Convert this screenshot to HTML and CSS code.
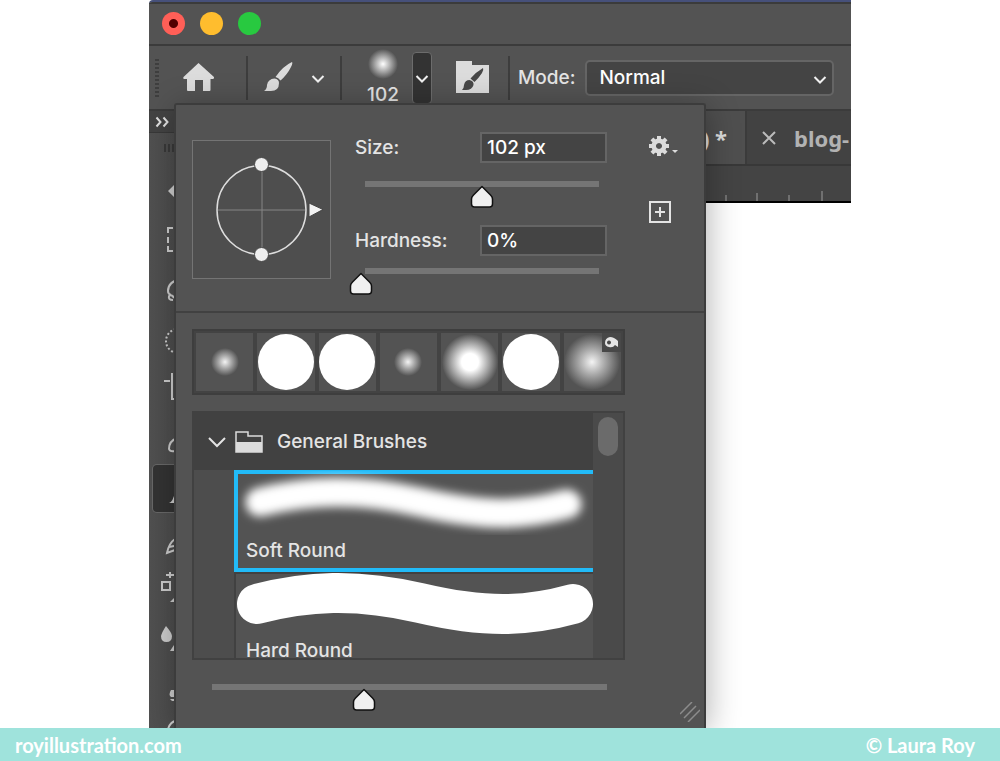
FILE: index.html
```html
<!DOCTYPE html>
<html lang="en">
<head>
    <meta charset="UTF-8">
    <meta name="viewport" content="width=device-width, initial-scale=1.0">
    <title>Brush Settings</title>
    <link rel="stylesheet" href="styles.css">
</head>
<body>

    <main class="stage">
        <div class="app">

            <!-- Window title bar -->
            <div class="titlebar">
                <button class="light close" aria-label="Close"></button>
                <button class="light minimize" aria-label="Minimize"></button>
                <button class="light expand" aria-label="Zoom"></button>
            </div>

            <!-- Options bar -->
            <div class="options">
                <div class="grip"></div>
                <button class="home" aria-label="Home">
                    <svg width="34" height="32" viewBox="0 0 34 32"><path fill="#dcdcdc" d="M16.500 1 L32 15 Q32.500 17 30 17 H28.500 V28 Q28.500 29 27.500 29 H21 V18 H13 V29 H6 Q5 29 5 28 V17 H3 Q0.500 17 1.500 15 Z"/></svg>
                </button>
                <div class="divider"></div>
                <button class="tool" aria-label="Brush tool">
                    <svg width="32" height="34" viewBox="0 0 32 34"><path fill="#dcdcdc" d="M30 1 Q31 2 29 6 Q25 14 18.500 19.500 Q16.500 16.500 13.500 16 Q21 5 30 1 Z M12.500 17.500 Q17 18 17 22 Q17 30 9 30 H2 Q5 28 5 24 Q6 18 12.500 17.500 Z"/></svg>
                </button>
                <button class="tool-menu" aria-label="Tool presets">
                    <svg width="16" height="16" viewBox="0 0 16 16"><path class="chevron" d="M2.500 6 L8 11.500 L13.500 6"/></svg>
                </button>
                <div class="divider"></div>
                <div class="brush-size">
                    <div class="tip"></div>
                    <div>102</div>
                </div>
                <button class="brush-menu" aria-label="Brush preset picker">
                    <svg width="16" height="16" viewBox="0 0 16 16"><path class="chevron" d="M2.500 6 L8 11.500 L13.500 6"/></svg>
                </button>
                <button class="folder" aria-label="Brush settings">
                    <svg width="35" height="34" viewBox="0 0 35 34"><path fill="#dcdcdc" d="M1 0 H17 V4 H34 V32 H1 Z"/><path fill="#484848" d="M28 7 Q29 9 27 12 Q23 18 19.500 21 L15.500 17.500 Q21 11 28 7 Z M14.500 19 Q19 20 18.500 24 Q17 29 11 29 H7 Q9 27 9 24 Q10 19 14.500 19 Z"/></svg>
                </button>
                <div class="divider"></div>
                <label class="mode-label" for="mode">Mode:</label>
                <div class="mode">
                    <select id="mode">
                        <option>Normal</option>
                        <option>Dissolve</option>
                        <option>Multiply</option>
                    </select>
                    <svg width="16" height="16" viewBox="0 0 16 16"><path class="chevron" d="M2.500 6 L8 11.500 L13.500 6"/></svg>
                </div>
            </div>

            <div class="workspace">

                <!-- Tools, mostly hidden behind the brush panel -->
                <div class="toolbar">
                    <button class="expand-tools" aria-label="Expand tools">
                        <svg width="16" height="12" viewBox="0 0 16 12"><path fill="none" stroke="#e0e0e0" stroke-width="2" d="M1.500 1.500 L5.500 6 L1.500 10.500 M8.500 1.500 L12.500 6 L8.500 10.500"/></svg>
                    </button>
                    <div class="toolbar-grip"></div>
                    <div class="tools">
                        <button aria-label="Move"><svg viewBox="0 0 47 47"><path fill="#ccc" d="M15 20 L21 14 V18 H26 V22 H21 V26 Z"/></svg></button>
                        <button aria-label="Marquee"><svg viewBox="0 0 47 47"><path class="line" d="M20 8 H15 V13 M15 17 V23 M15 26 V31 H20 M24 8 H30 M24 31 H30"/></svg></button>
                        <button aria-label="Lasso"><svg viewBox="0 0 47 47"><path class="line" d="M27 10 Q15 13 15 22 Q15 25 18 26 M20 31 Q15 31 16 27 Q19 25 21 29"/></svg></button>
                        <button aria-label="Quick selection"><svg viewBox="0 0 47 47"><circle class="line" cx="25" cy="23" r="12" stroke-dasharray="2 2"/></svg></button>
                        <button aria-label="Crop"><svg viewBox="0 0 47 47"><path class="line" d="M11 14 H17 M19 6 V32 H35"/></svg></button>
                        <button aria-label="Eyedropper"><svg viewBox="0 0 47 47"><path class="line" d="M24 22 Q16 25 16 33 Q17 36 22 35"/></svg></button>
                        <button class="active" aria-label="Brush"><svg viewBox="0 0 47 47"><path fill="#ccc" d="M22 27 Q20 37 16 38 H26 V27 Z"/></svg></button>
                        <button aria-label="Clone stamp"><svg viewBox="0 0 47 47"><path class="line" d="M22 25 Q16 29 14 39 L22 36 M16 33 L21 32"/></svg></button>
                        <button aria-label="Healing"><svg viewBox="0 0 47 47"><rect class="line" x="9" y="19" width="8" height="8"/><path class="line" d="M13 12 H21 M17 9 V15"/><path fill="#ccc" d="M21 35 V39 H17 Z"/></svg></button>
                        <button aria-label="Blur"><svg viewBox="0 0 47 47"><path fill="#ccc" d="M13 14 Q19 21 19 24 Q19 30 13.500 30 Q8 30 8 24 Q9 20 13 14 Z M21 33 V39 H17 Z"/></svg></button>
                        <button aria-label="Smudge"><svg viewBox="0 0 47 47"><path fill="#ccc" d="M18 29 H24 V36 H18 Q15 34 18 29 Z M17 38 H24 V40 H19 Z"/></svg></button>
                        <button aria-label="Dodge"><svg viewBox="0 0 47 47"><circle class="line" cx="26" cy="21" r="11"/></svg></button>
                    </div>
                </div>

                <!-- Open documents -->
                <div class="documents">
                    <div class="tabs">
                        <button class="tab current">) *</button>
                        <button class="tab">
                            <svg width="14" height="14" viewBox="0 0 14 14"><path fill="none" stroke="#bbb" stroke-width="2" d="M1 1 L13 13 M13 1 L1 13"/></svg>
                            blog-
                        </button>
                    </div>
                    <div class="ruler">
                        <svg width="130" height="10" viewBox="0 0 130 10"><path fill="none" stroke="#707070" stroke-width="2" d="M5 4 V10 M36 2 V10 M68 4 V10 M101 0 V10"/></svg>
                    </div>
                </div>
            </div>

            <!-- Brush panel -->
            <div class="panel">
                <div class="shape-settings">
                    <svg class="angle" viewBox="0 0 137 137">
                        <path stroke="#858585" d="M24 69 H113 M69 24 V114"/>
                        <circle cx="68.500" cy="69" r="44.500" fill="none" stroke="#ddd" stroke-width="1.500"/>
                        <circle cx="68.500" cy="23.500" r="7" fill="#eee" stroke="#484848"/>
                        <circle cx="68.500" cy="113.500" r="7" fill="#eee" stroke="#484848"/>
                        <path fill="#f2f2f2" stroke="#444" d="M116 62 L130 68.500 L116 76 Z"/>
                    </svg>
                    <div class="controls">
                        <div class="field">
                            <label for="size">Size:</label>
                            <input id="size" class="value" type="text" value="102 px">
                        </div>
                        <input class="slider" type="range" min="0" max="100" value="51" aria-label="Size">
                        <div class="field">
                            <label for="hardness">Hardness:</label>
                            <input id="hardness" class="value" type="text" value="0%">
                        </div>
                        <input class="slider" type="range" min="0" max="100" value="0" aria-label="Hardness">
                    </div>
                    <div class="actions">
                        <button aria-label="Panel options">
                            <svg width="30" height="20" viewBox="0 0 30 20"><g fill="#dcdcdc"><path fill-rule="evenodd" d="M10 2.500 A7.500 7.500 0 1 1 9.990 2.500 Z M10 7 A3 3 0 1 0 10.010 7 Z"/><g id="teeth"><rect x="8" y="0" width="4" height="4"/><rect x="8" y="16" width="4" height="4"/><rect x="0" y="8" width="4" height="4"/><rect x="16" y="8" width="4" height="4"/></g><use href="#teeth" transform="rotate(45 10 10)"/><path d="M23 14 H29 L26 17 Z"/></g></svg>
                        </button>
                        <button aria-label="New brush">
                            <svg width="22" height="22" viewBox="0 0 22 22"><path fill="none" stroke="#e4e4e4" stroke-width="2" d="M1 1 H21 V21 H1 Z M11 6 V16 M6 11 H16"/></svg>
                        </button>
                    </div>
                </div>

                <div class="library">
                    <div class="recent">
                        <button aria-label="Soft round small"><span class="dot soft small"></span></button>
                        <button aria-label="Hard round"><span class="dot hard"></span></button>
                        <button aria-label="Hard round"><span class="dot hard"></span></button>
                        <button aria-label="Soft round small"><span class="dot soft small"></span></button>
                        <button aria-label="Soft round"><span class="dot medium"></span></button>
                        <button aria-label="Hard round"><span class="dot hard"></span></button>
                        <button aria-label="Soft round tool preset">
                            <span class="dot soft"></span>
                            <svg class="badge" width="19" height="19" viewBox="0 0 19 19"><rect width="19" height="19" fill="#484848"/><path fill="#e4e4e4" fill-rule="evenodd" d="M3 10 Q3 5 8 4 Q12 4 16 8 V14 L13 12 Q11 15 7 14 Q3 13 3 10 Z M7 7.500 A2 2 0 1 0 7.010 7.500 Z"/></svg>
                        </button>
                    </div>

                    <div class="list">
                        <div class="list-content">
                            <button class="group">
                                <svg width="18" height="12" viewBox="0 0 18 12"><path fill="none" stroke="#e4e4e4" stroke-width="2" d="M1 2 L9 10 L17 2"/></svg>
                                <svg width="28" height="22" viewBox="0 0 28 22"><path fill="none" stroke="#dcdcdc" stroke-width="1.500" d="M1 21 V1 H13 V5 H27 V21 Z"/><path fill="#dcdcdc" d="M1 11 H27 V21 H1 Z"/></svg>
                                General Brushes
                            </button>
                            <div class="brushes">
                                <button class="brush selected">
                                    <svg viewBox="0 0 354 60" preserveAspectRatio="none">
                                        <defs><filter id="soft" x="-10%" y="-100%" width="120%" height="300%"><feGaussianBlur stdDeviation="5"/></filter></defs>
                                        <path d="M22 28 C 70 16, 120 14, 181 28 S 281 43 328 30" fill="none" stroke="#fff" stroke-width="29" stroke-linecap="round" filter="url(#soft)"/>
                                    </svg>
                                    <span>Soft Round</span>
                                </button>
                                <button class="brush">
                                    <svg viewBox="0 0 357 60" preserveAspectRatio="none"><path d="M21 30 C 70 17, 120 14, 184 29 S 290 43 337 30" fill="none" stroke="#fff" stroke-width="40" stroke-linecap="round"/></svg>
                                    <span>Hard Round</span>
                                </button>
                            </div>
                        </div>
                        <div class="scrollbar"><div class="scroll-thumb"></div></div>
                    </div>

                    <input class="slider zoom" type="range" min="0" max="100" value="39" aria-label="Thumbnail size">
                    <svg class="resize" width="20" height="20" viewBox="0 0 20 20"><path stroke="#8c8c8c" stroke-width="1.500" d="M0 12 L12 0 M4 16 L16 4 M8 20 L20 8"/></svg>
                </div>
            </div>
        </div>
    </main>

    <footer class="credits">
        <a href="#">royillustration.com</a>
        <span>© Laura Roy</span>
    </footer>

</body>
</html>
```

FILE: styles.css
```css
* {
    box-sizing: border-box;
}
body {
    margin: 0;
    height: 100vh;
    display: flex;
    flex-direction: column;
    background: #fff;
    color: #e4e4e4;
    font-family: Inter, "Liberation Sans", sans-serif;
    font-size: 19px;
    font-weight: 500;
}
button {
    border: 0;
    padding: 0;
    background: none;
    color: inherit;
    font: inherit;
    cursor: pointer;
}
svg {
    display: block;
}
.chevron {
    fill: none;
    stroke: #f0f0f0;
    stroke-width: 2;
}
.stage {
    flex: 1;
    min-height: 0;
    padding: 0 149px;
}
.app {
    position: relative;
    height: 100%;
    display: flex;
    flex-direction: column;
    overflow: hidden;
    border-top: 2px solid #46507a;
    border-radius: 4px 0 0 0;
    background: #fff;
}

/* title bar */
.titlebar {
    flex: none;
    height: 44px;
    padding: 0 13px 2px;
    display: flex;
    align-items: center;
    gap: 15px;
    background: #535353;
    border-top: 2px solid #3b3b3b;
    border-bottom: 2px solid #3b3b3b;
}
.light {
    width: 23px;
    height: 23px;
    border-radius: 50%;
}
.close {
    background: radial-gradient(circle, #500000 4px, #ff5f57 5px);
}
.minimize {
    background: #ffbd2e;
}
.expand {
    background: #28c940;
}

/* options bar */
.options {
    flex: none;
    height: 65px;
    padding: 0 17px 0 6px;
    display: flex;
    align-items: center;
    background: #535353;
    border-bottom: 2px solid #3b3b3b;
}
.grip {
    width: 4px;
    height: 38px;
    background: repeating-linear-gradient(#3e3e3e 0 2px, transparent 2px 4px);
}
.home {
    margin: 0 30px 0 23px;
}
.divider {
    flex: none;
    width: 2px;
    height: 44px;
    background: #3d3d3d;
}
.tool {
    margin: 0 16px 0 14px;
}
.tool-menu {
    margin-right: 14px;
}
.brush-size {
    width: 40px;
    margin: 0 9px 0 21px;
    display: flex;
    flex-direction: column;
    align-items: center;
    gap: 4px;
    line-height: 24px;
}
.tip {
    width: 30px;
    height: 30px;
    border-radius: 50%;
    background: radial-gradient(circle closest-side, #fff, #aaa 50%, #535353);
}
.brush-menu {
    width: 20px;
    height: 52px;
    display: flex;
    align-items: center;
    justify-content: center;
    background: #333;
    border: 1px solid #6c6c6c;
    border-radius: 4px;
}
.brush-menu svg {
    flex: none;
}
.folder {
    margin: 0 18px 0 23px;
}
.mode-label {
    margin: 0 10px 0 8px;
}
.mode {
    position: relative;
    flex: 1;
}
.mode select {
    appearance: none;
    width: 100%;
    height: 36px;
    padding: 0 12px;
    background: #444;
    border: 2px solid #656565;
    border-radius: 5px;
    color: #fff;
    font: inherit;
}
.mode svg {
    position: absolute;
    top: 11px;
    right: 6px;
    pointer-events: none;
}

/* tools and documents */
.workspace {
    flex: 1;
    min-height: 0;
    display: flex;
}
.toolbar {
    flex: none;
    width: 56px;
    overflow: hidden;
    background: linear-gradient(90deg, #505050, #4a4a4a);
}
.expand-tools {
    width: 100%;
    height: 22px;
    padding-left: 6px;
    background: #434343;
    border-bottom: 1px solid #383838;
}
.toolbar-grip {
    width: 26px;
    height: 8px;
    margin: 7px auto 19px;
    background: repeating-linear-gradient(90deg, #393939 0 2px, transparent 2px 4px);
}
.tools {
    padding: 0 4px;
    display: flex;
    flex-direction: column;
    gap: 2px;
}
.tools button {
    flex: none;
    width: 47px;
    height: 47px;
}
.tools .active {
    background: #333;
    border-radius: 4px;
    box-shadow: 0 0 0 1px #686868;
}
.line {
    fill: none;
    stroke: #ccc;
    stroke-width: 2;
}
.documents {
    flex: 1;
    min-width: 0;
}
.tabs {
    height: 55px;
    display: flex;
    justify-content: flex-end;
    background: #424242;
    border-bottom: 2px solid #383838;
    font-family: "Noto Sans", "Open Sans", sans-serif;
    font-size: 22px;
    font-weight: bold;
}
.tab {
    width: 104px;
    padding-left: 15px;
    display: flex;
    align-items: center;
    gap: 18px;
    overflow: hidden;
    color: #b2b2b2;
}
.tab svg {
    flex: none;
}
.tab.current {
    justify-content: flex-end;
    padding: 0 18px 0 0;
    background: #4f4f4f;
    border-right: 2px solid #3b3b3b;
    color: #ddd;
}
.ruler {
    height: 37px;
    display: flex;
    align-items: flex-end;
    justify-content: flex-end;
    background: #444;
    border-bottom: 2px solid #000;
}

/* brush panel, drops over the workspace */
.panel {
    position: absolute;
    top: 101px;
    right: 145px;
    bottom: 0;
    left: 25px;
    display: flex;
    flex-direction: column;
    background: #535353;
    border: 2px solid #3c3c3c;
    border-bottom: 0;
    border-radius: 3px 3px 0 0;
    box-shadow: 2px 4px 32px rgba(0, 0, 0, 0.3);
}
.shape-settings {
    padding: 27px 25px 15px 16px;
    display: flex;
    align-items: flex-start;
    border-bottom: 2px solid #414141;
}
.angle {
    flex: none;
    width: 139px;
    height: 139px;
    margin-top: 8px;
    background: #4e4e4e;
    border: 1px solid #747474;
}
.controls {
    flex: 1;
    margin: 0 38px 0 18px;
}
.field {
    padding: 0 4px 0 6px;
    display: flex;
    align-items: center;
    justify-content: space-between;
}
.value {
    width: 127px;
    height: 31px;
    padding: 0 5px;
    background: #444;
    border: 2px solid #656565;
    color: #fff;
    font: inherit;
}
.slider {
    appearance: none;
    display: block;
    width: 100%;
    height: 28px;
    margin: 18px 0 16px;
    background: none;
}
.field + .slider:last-child {
    margin: 12px 0 0;
}
.slider::-webkit-slider-runnable-track {
    height: 28px;
    background: linear-gradient(#757575, #757575) no-repeat 16px 0 / calc(100% - 28px) 6px;
}
.slider::-webkit-slider-thumb {
    appearance: none;
    width: 24px;
    height: 24px;
    margin-top: 4px;
    background: url("data:image/svg+xml,%3Csvg xmlns='http://www.w3.org/2000/svg' viewBox='0 0 24 24'%3E%3Cpath fill='%23f0f0f0' stroke='%23111' stroke-width='1.500' stroke-linejoin='round' d='M12 1.500 L20.500 10 Q22.500 12 22.500 14 V19 Q22.500 22 19.500 22 H4.500 Q1.500 22 1.500 19 V14 Q1.500 12 3.500 10 Z'/%3E%3C/svg%3E");
}
.actions {
    padding-top: 4px;
    display: flex;
    flex-direction: column;
    align-items: flex-start;
    gap: 45px;
}
.library {
    position: relative;
    flex: 1;
    min-height: 0;
    padding: 16px 79px 16px 16px;
    display: flex;
    flex-direction: column;
}
.recent {
    flex: none;
    display: grid;
    grid-template-columns: repeat(7, 1fr);
    gap: 4px;
    padding: 2px;
    background: #434343;
    border: 2px solid #3e3e3e;
}
.recent button {
    position: relative;
    height: 58px;
    display: flex;
    align-items: center;
    justify-content: center;
    background: #535353;
}
.dot {
    width: 56px;
    height: 56px;
    border-radius: 50%;
}
.hard {
    background: #fff;
}
.soft {
    background: radial-gradient(circle closest-side, #f4f4f4, #aaa 45%, #535353);
}
.medium {
    background: radial-gradient(circle closest-side, #fff 30%, #aaa 65%, #535353);
}
.small {
    width: 28px;
    height: 28px;
}
.badge {
    position: absolute;
    top: 0;
    right: 0;
}
.list {
    flex: 1;
    min-height: 0;
    margin-top: 16px;
    display: flex;
    overflow: hidden;
    background: #4d4d4d;
    border: 2px solid #414141;
}
.list-content {
    flex: 1;
    overflow: hidden;
}
.group {
    width: 100%;
    height: 57px;
    padding-left: 14px;
    display: flex;
    align-items: center;
    gap: 9px;
    background: #414141;
}
.group svg + svg {
    margin-right: 5px;
}
.brushes {
    padding-left: 40px;
}
.brush {
    display: block;
    width: 100%;
    background: #535353;
    border-top: 2px solid #414141;
    border-left: 2px solid #414141;
    text-align: left;
}
.brush svg {
    width: 100%;
    height: 60px;
    overflow: visible;
}
.brush span {
    display: block;
    padding-left: 10px;
    line-height: 34px;
}
.brush.selected {
    border: 4px solid #22bbf8;
    border-right: 0;
}
.brush.selected span {
    padding-left: 8px;
}
.scrollbar {
    flex: none;
    width: 30px;
    padding: 4px 5px;
    background: #4a4a4a;
}
.scroll-thumb {
    height: 39px;
    border-radius: 10px;
    background: #6b6b6b;
}
.library .zoom {
    width: auto;
    margin: 24px 6px 0 4px;
}
.resize {
    position: absolute;
    right: 4px;
    bottom: 6px;
}

/* footer strip */
.credits {
    flex: none;
    height: 33px;
    padding: 0 25px 0 15px;
    display: flex;
    align-items: center;
    justify-content: space-between;
    background: #9fe3dc;
    color: #fff;
    font-family: Lato, sans-serif;
    font-size: 20px;
    font-weight: bold;
}
.credits a {
    color: inherit;
    text-decoration: none;
}
```
